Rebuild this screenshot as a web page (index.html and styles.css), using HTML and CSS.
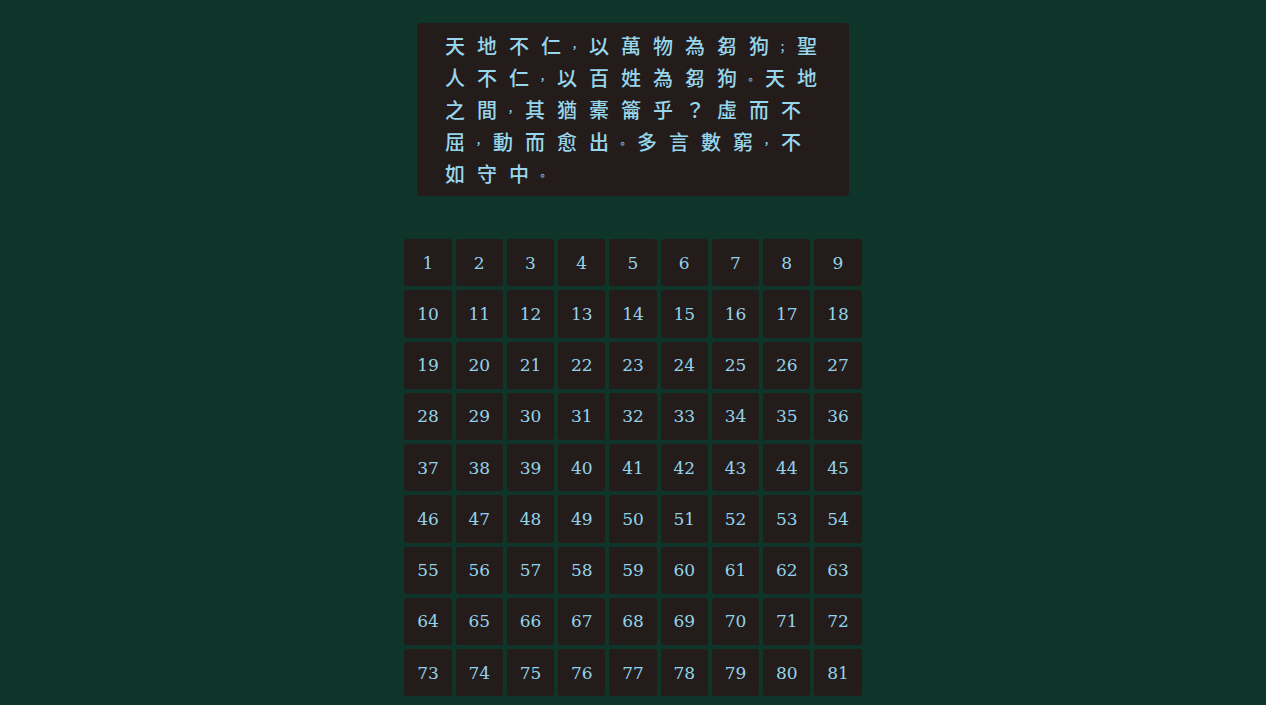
FILE: index.html
```html
<!DOCTYPE html>
<html lang="zh-Hant">
<head>
<meta charset="utf-8">
<title>道德經 第五章</title>
<link rel="stylesheet" href="styles.css">
</head>
<body>
<main class="page">
  <section class="verse">
    <p class="verse-text">天地不仁<span class="p">，</span>以萬物為芻狗<span class="p">；</span>聖人不仁<span class="p">，</span>以百姓為芻狗<span class="p">。</span>天地之間<span class="p">，</span>其猶橐籥乎？虛而不屈<span class="p">，</span>動而愈出<span class="p">。</span>多言數窮<span class="p">，</span>不如守中<span class="p">。</span></p>
  </section>
  <section class="board">
    <div class="cell">1</div><div class="cell">2</div><div class="cell">3</div><div class="cell">4</div><div class="cell">5</div><div class="cell">6</div><div class="cell">7</div><div class="cell">8</div><div class="cell">9</div>
    <div class="cell">10</div><div class="cell">11</div><div class="cell">12</div><div class="cell">13</div><div class="cell">14</div><div class="cell">15</div><div class="cell">16</div><div class="cell">17</div><div class="cell">18</div>
    <div class="cell">19</div><div class="cell">20</div><div class="cell">21</div><div class="cell">22</div><div class="cell">23</div><div class="cell">24</div><div class="cell">25</div><div class="cell">26</div><div class="cell">27</div>
    <div class="cell">28</div><div class="cell">29</div><div class="cell">30</div><div class="cell">31</div><div class="cell">32</div><div class="cell">33</div><div class="cell">34</div><div class="cell">35</div><div class="cell">36</div>
    <div class="cell">37</div><div class="cell">38</div><div class="cell">39</div><div class="cell">40</div><div class="cell">41</div><div class="cell">42</div><div class="cell">43</div><div class="cell">44</div><div class="cell">45</div>
    <div class="cell">46</div><div class="cell">47</div><div class="cell">48</div><div class="cell">49</div><div class="cell">50</div><div class="cell">51</div><div class="cell">52</div><div class="cell">53</div><div class="cell">54</div>
    <div class="cell">55</div><div class="cell">56</div><div class="cell">57</div><div class="cell">58</div><div class="cell">59</div><div class="cell">60</div><div class="cell">61</div><div class="cell">62</div><div class="cell">63</div>
    <div class="cell">64</div><div class="cell">65</div><div class="cell">66</div><div class="cell">67</div><div class="cell">68</div><div class="cell">69</div><div class="cell">70</div><div class="cell">71</div><div class="cell">72</div>
    <div class="cell">73</div><div class="cell">74</div><div class="cell">75</div><div class="cell">76</div><div class="cell">77</div><div class="cell">78</div><div class="cell">79</div><div class="cell">80</div><div class="cell">81</div>
  </section>
</main>
</body>
</html>
```
FILE: styles.css
```css
html, body {
  margin: 0;
  padding: 0;
  background: #0f3429;
}
body {
  min-height: 705px;
  color: #93d3ea;
  font-family: "DejaVu Serif", serif;
}
.page {
  display: flex;
  flex-direction: column;
  align-items: center;
  padding-top: 23px;
  gap: 43px;
}
.verse {
  width: 432px;
  box-sizing: border-box;
  padding: 7px 18px 6px 28px;
  background: #231c1a;
  border-radius: 4px;
}
.verse-text {
  margin: 0;
  font-family: "Noto Sans CJK TC", "Noto Sans CJK SC", sans-serif;
  font-size: 20px;
  font-weight: 500;
  line-height: 32px;
  letter-spacing: 12px;
  color: #97d6ec;
}
.p {
  font-size: 11px;
  line-height: 0;
  letter-spacing: 5px;
  margin-left: -4px;
  margin-right: 4px;
  vertical-align: 2px;
}
.board {
  display: grid;
  grid-template-columns: repeat(9, 47.25px);
  grid-auto-rows: 47.25px;
  gap: 4px;
}
.cell {
  display: flex;
  align-items: center;
  justify-content: center;
  background: #231c1a;
  border-radius: 3px;
  font-size: 17px;
  color: #93d3ea;
}
```
